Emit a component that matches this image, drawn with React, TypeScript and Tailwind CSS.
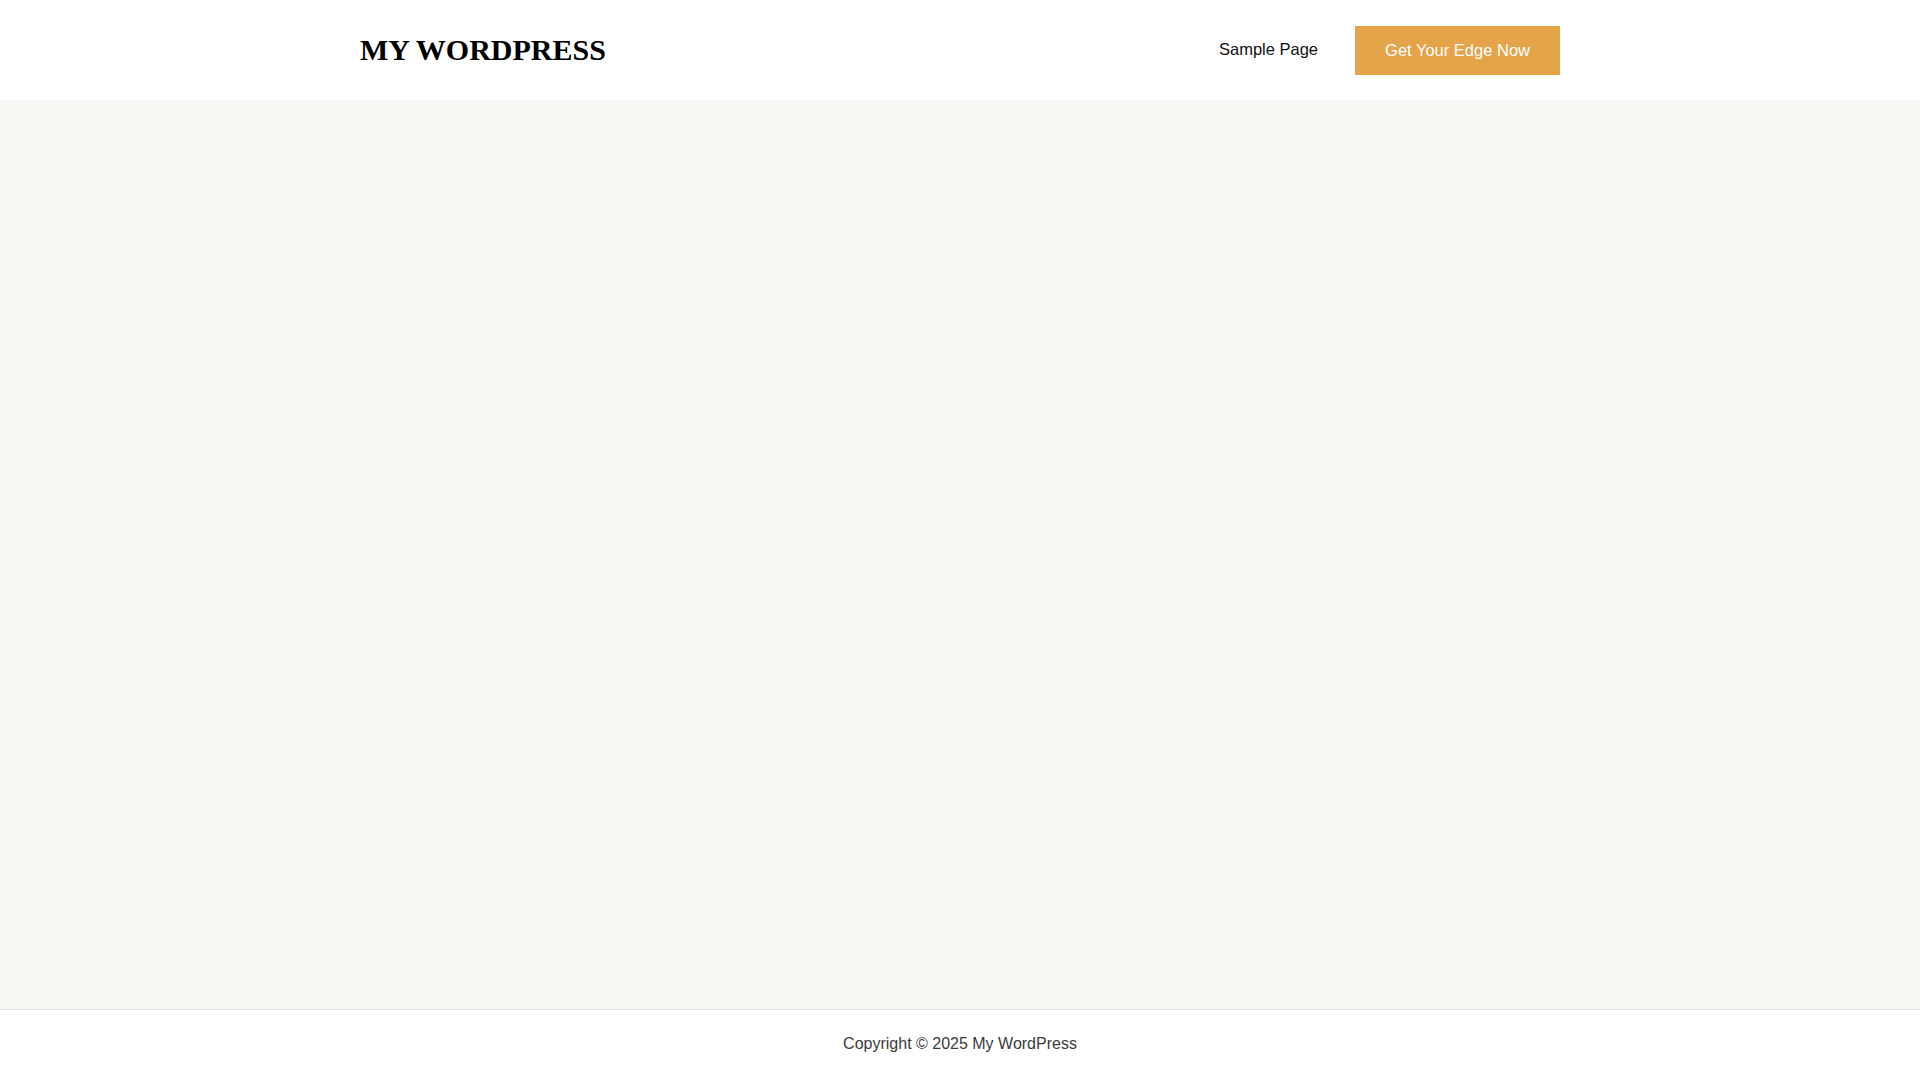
export default function App() {
  return (
    <div className="min-h-screen flex flex-col bg-white" style={{ fontFamily: '"Liberation Sans", Arial, sans-serif' }}>
      <header className="h-[100px] bg-white">
        <div className="max-w-[1200px] mx-auto h-full flex items-center justify-between">
          <a
            className="text-[30px] font-bold text-black leading-none tracking-normal"
            style={{ fontFamily: '"Liberation Serif", "Times New Roman", serif' }}
          >
            MY WORDPRESS
          </a>
          <nav className="flex items-center gap-[37px]">
            <a className="text-[16.5px] text-[#111111] mb-[2px]">Sample Page</a>
            <a className="h-[49px] px-[30px] flex items-center bg-[#e5a34a] text-white text-[16.5px]">
              Get Your Edge Now
            </a>
          </nav>
        </div>
      </header>
      <main className="flex-1 bg-[#f7f6f3]"></main>
      <footer className="h-[71px] border-t border-[#e2e2e2] bg-white flex items-center justify-center pb-[2px]">
        <p className="text-[16px] text-[#3a3a3a]">Copyright © 2025 My WordPress</p>
      </footer>
    </div>
  );
}
